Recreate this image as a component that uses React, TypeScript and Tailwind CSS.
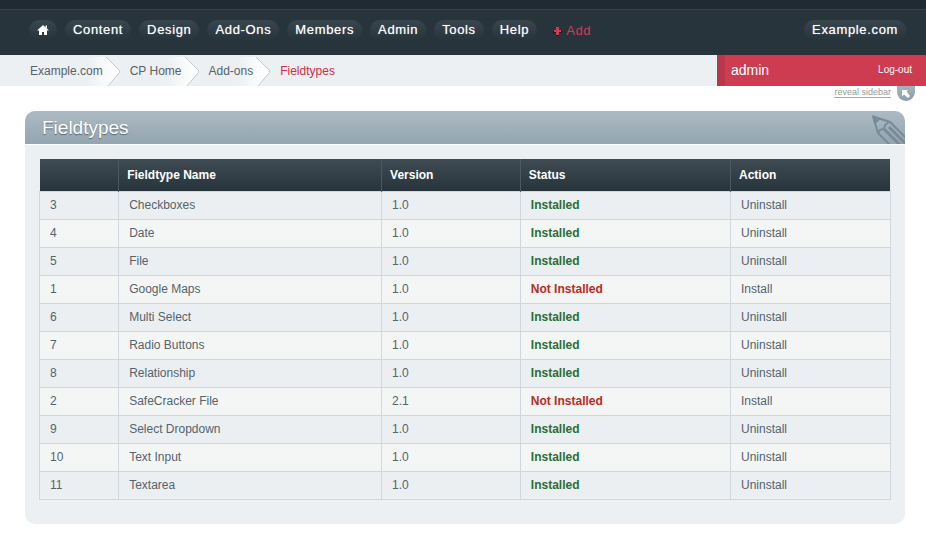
import type { ReactNode } from "react";

interface Fieldtype {
  id: number;
  name: string;
  version: string;
  installed: boolean;
}

const NAV_ITEMS = ["Content", "Design", "Add-Ons", "Members", "Admin", "Tools", "Help"];

const CRUMBS = ["Example.com", "CP Home", "Add-ons"];

const FIELDTYPES: Fieldtype[] = [
  { id: 3, name: "Checkboxes", version: "1.0", installed: true },
  { id: 4, name: "Date", version: "1.0", installed: true },
  { id: 5, name: "File", version: "1.0", installed: true },
  { id: 1, name: "Google Maps", version: "1.0", installed: false },
  { id: 6, name: "Multi Select", version: "1.0", installed: true },
  { id: 7, name: "Radio Buttons", version: "1.0", installed: true },
  { id: 8, name: "Relationship", version: "1.0", installed: true },
  { id: 2, name: "SafeCracker File", version: "2.1", installed: false },
  { id: 9, name: "Select Dropdown", version: "1.0", installed: true },
  { id: 10, name: "Text Input", version: "1.0", installed: true },
  { id: 11, name: "Textarea", version: "1.0", installed: true },
];

function NavPill({ label, children }: { label?: string; children: ReactNode }) {
  return (
    <a
      href="#"
      aria-label={label}
      className="flex h-5 items-center rounded-full bg-linear-to-b from-[#3a464e] to-[#27343c] px-2 text-[13px] font-medium tracking-wider text-white [text-shadow:0_0_1px_#ffffff99]"
    >
      {children}
    </a>
  );
}

function MainNav() {
  return (
    <header className="border-t-9 border-[#1f2a32] bg-[#27343c]">
      <nav className="flex h-[46px] items-start gap-2 border-t border-[#36434b] pt-[10px] pr-5 pl-[29px]">
        <NavPill label="Home">
          <svg viewBox="0 0 12 10" className="h-[10px] w-3 fill-white" aria-hidden="true">
            <path d="M6 0 0 5.500h2V10h3V7h2v3h3V5.500h2z" />
            <path d="M8.500.5H10V4L8.500 3z" />
          </svg>
        </NavPill>
        {NAV_ITEMS.map((item) => (
          <NavPill key={item}>{item}</NavPill>
        ))}
        <a
          href="#"
          className="ml-2 flex h-[22px] items-center gap-1 text-[13px] tracking-wider text-[#d33b52]"
        >
          <svg viewBox="0 0 9 9" className="size-[9px]" aria-hidden="true">
            <path d="M3 2h3v2h3v2H6v3H3V6H0V4h3z" fill="#141c21" />
            <path d="M3 0h3v3h2v2H6v3H3V5H1V3h2z" fill="#d33b52" />
          </svg>
          Add
        </a>
        <div className="ml-auto">
          <NavPill>Example.com</NavPill>
        </div>
      </nav>
    </header>
  );
}

function CrumbArrow() {
  return (
    <svg viewBox="0 0 34 29" className="-ml-4 h-[29px] w-[34px] shrink-0" aria-hidden="true">
      <defs>
        <linearGradient id="crumb-fade">
          <stop offset="0" stopColor="#fff" stopOpacity="0" />
          <stop offset="0.8" stopColor="#fff" stopOpacity="0.95" />
        </linearGradient>
      </defs>
      <path d="M0 0h19l14 14.500L21 29H0z" fill="url(#crumb-fade)" />
      <path d="M19 0 32.500 13.500v2L21 29" fill="none" stroke="#c3c9cd" />
    </svg>
  );
}

function Breadcrumbs() {
  return (
    <div className="flex h-[31px] bg-[#ecf0f3] text-xs text-[#55636b]">
      <nav aria-label="Breadcrumb" className="flex flex-1 items-end pl-[30px]">
        {CRUMBS.map((crumb) => (
          <span key={crumb} className="flex items-center">
            <a href="#" className="relative z-10 pb-[2px]">
              {crumb}
            </a>
            <CrumbArrow />
            <span className="w-[9px]" />
          </span>
        ))}
        <span aria-current="page" className="flex h-[29px] items-center pb-[2px] text-[#ce2c45]">
          Fieldtypes
        </span>
      </nav>
      <div className="flex w-[209px] items-center justify-between border-l-8 border-[#b8374d] bg-[#ce3c52] pr-[14px] pb-[2px] pl-[6px] text-white">
        <a href="#" className="text-sm">
          admin
        </a>
        <a href="#" className="text-[10px]">
          Log-out
        </a>
      </div>
    </div>
  );
}

function SidebarToggle() {
  return (
    <div className="flex h-[25px] items-start justify-end pr-[11px]">
      <button type="button" className="flex cursor-pointer items-start gap-[6px]">
        <span className="border-b border-[#a3aaa6] pt-[2px] text-[9px] leading-[9px] text-[#929c98]">
          reveal sidebar
        </span>
        <span className="flex h-[15px] w-[18px] items-center justify-center rounded-b-full bg-linear-to-b from-[#a5b3bd] to-[#8d9faa]">
          <svg viewBox="0 0 8 8" className="size-2" aria-hidden="true">
            <path d="M0 0h6L4.500 1.500 8 6 6 8 2 4.500.5 6H0z" fill="#fff" />
          </svg>
        </span>
      </button>
    </div>
  );
}

function PencilIcon() {
  return (
    <svg viewBox="0 0 34 29" className="h-[29px] w-[34px] self-end" aria-hidden="true">
      <g fill="none" stroke="#778b99" strokeWidth="2">
        <path d="M2 1.500 7 18l13 13M2 1.500 19 7l18 18" />
        <path d="M7 18l2-3 4-1 1-4 4-3" />
        <path d="M13 14l16 16" strokeWidth="3" />
        <path d="M18 12l18 18" strokeWidth="3" />
      </g>
      <path d="M1 0l9 3.500-6 6z" fill="#778b99" />
    </svg>
  );
}

function FieldtypeTable({ rows }: { rows: Fieldtype[] }) {
  return (
    <table className="w-full table-fixed border-collapse text-left text-xs text-[#55636b]">
      <colgroup>
        <col className="w-[9.3%]" />
        <col className="w-[30.9%]" />
        <col className="w-[16.3%]" />
        <col className="w-[24.7%]" />
        <col />
      </colgroup>
      <thead>
        <tr className="h-8 bg-linear-to-b from-[#3f4c53] to-[#28343c] text-white">
          <td className="border-r border-[#4a5963]" />
          {["Fieldtype Name", "Version", "Status", "Action"].map((heading) => (
            <th
              key={heading}
              scope="col"
              className="border-r border-[#4a5963] px-2 font-bold last:border-r-0"
            >
              {heading}
            </th>
          ))}
        </tr>
      </thead>
      <tbody>
        {rows.map((row) => (
          <tr
            key={row.id}
            className="h-7 odd:bg-[#ebeff2] even:bg-[#f4f6f6] [&>td]:border [&>td]:border-[#d0d7df] [&>td]:px-[10px]"
          >
            <td>{row.id}</td>
            <td>{row.name}</td>
            <td>{row.version}</td>
            <td className={row.installed ? "font-bold text-[#2c6e31]" : "font-bold text-[#bb2a1c]"}>
              {row.installed ? "Installed" : "Not Installed"}
            </td>
            <td>
              <a href="#">{row.installed ? "Uninstall" : "Install"}</a>
            </td>
          </tr>
        ))}
      </tbody>
    </table>
  );
}

export default function App() {
  return (
    <div className="min-h-screen bg-white font-['Liberation_Sans',Arial,sans-serif]">
      <MainNav />
      <Breadcrumbs />
      <SidebarToggle />
      <main className="mr-[21px] ml-[25px] overflow-hidden rounded-[10px] bg-[#ecf0f3]">
        <div className="flex h-[34px] items-center justify-between border-b border-white bg-linear-to-b from-[#adbac4] to-[#93a5af] pl-[17px]">
          <h1 className="pt-px text-[19px] text-white [text-shadow:0_1px_1px_#56656f]">
            Fieldtypes
          </h1>
          <PencilIcon />
        </div>
        <div className="px-[14px] pt-[14px] pb-6">
          <FieldtypeTable rows={FIELDTYPES} />
        </div>
      </main>
    </div>
  );
}
